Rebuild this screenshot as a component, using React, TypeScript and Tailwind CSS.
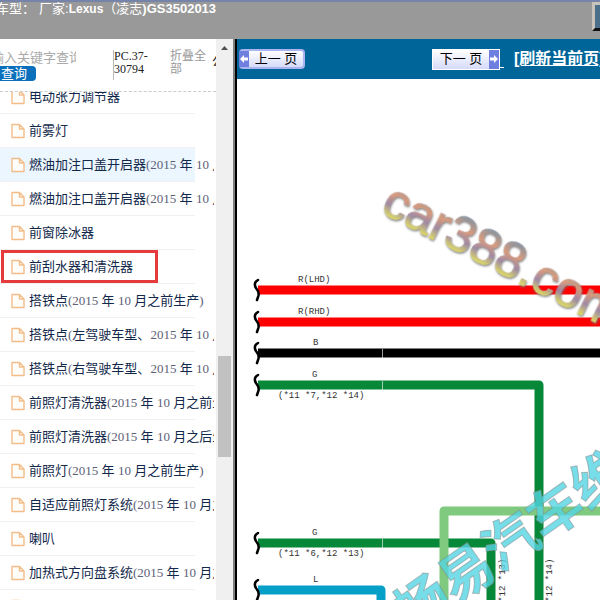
import React from "react";

const CJK_SANS = "font-['Liberation_Sans','Noto_Sans_CJK_SC',sans-serif]";
const CJK_SERIF = "font-['Liberation_Serif','Noto_Sans_CJK_SC',serif]";

const systems: { name: string; active?: boolean; marked?: boolean }[] = [
  { name: "电动张力调节器" },
  { name: "前雾灯" },
  { name: "燃油加注口盖开启器(2015 年 10 月之前生产)", active: true },
  { name: "燃油加注口盖开启器(2015 年 10 月之后生产)" },
  { name: "前窗除冰器" },
  { name: "前刮水器和清洗器", marked: true },
  { name: "搭铁点(2015 年 10 月之前生产)" },
  { name: "搭铁点(左驾驶车型、2015 年 10 月之后生产)" },
  { name: "搭铁点(右驾驶车型、2015 年 10 月之后生产)" },
  { name: "前照灯清洗器(2015 年 10 月之前生产)" },
  { name: "前照灯清洗器(2015 年 10 月之后生产)" },
  { name: "前照灯(2015 年 10 月之前生产)" },
  { name: "自适应前照灯系统(2015 年 10 月之后生产)" },
  { name: "喇叭" },
  { name: "加热式方向盘系统(2015 年 10 月之后生产)" },
  { name: "" },
];

function PageIcon() {
  return (
    <svg width="14" height="16" viewBox="0 0 14 16" className="shrink-0" aria-hidden="true">
      <path
        d="M1 1.5h7.5l4.5 4.5v8.5h-12zM8.5 1.5v4.5h4.5"
        fill="#fffdf9"
        stroke="#f3bd8a"
        strokeWidth="1.4"
        strokeLinejoin="round"
      />
    </svg>
  );
}

function Header() {
  return (
    <header className={`flex h-[39px] shrink-0 justify-between overflow-hidden border-t-2 border-[#7784aa] bg-[#999] text-white ${CJK_SANS}`}>
      <h1 className="-ml-1 flex items-start whitespace-pre text-[13px] leading-[14px]">
        <span>车型：</span>
        <span className="pl-1">厂家:</span>
        <b className="text-[12px]">Lexus</b>
        <span>（凌志</span>
        <b className="text-[13px]">)GS3502013</b>
      </h1>
      <button
        type="button"
        aria-label="菜单"
        className="h-[29px] w-2 border-y-[3px] border-l-[3px] border-t-[#c8c4bc] border-b-[#111] border-l-[#c8c4bc] bg-[#4b6f8a]"
      />
    </header>
  );
}

function SearchBar() {
  return (
    <form
      onSubmit={(e) => e.preventDefault()}
      className="flex h-[53px] shrink-0 items-start overflow-hidden border-b border-dashed border-[#ccc] pt-[11px]"
    >
      <div className="flex w-[113px] shrink-0 flex-col items-start">
        <input
          aria-label="关键字"
          placeholder="输入关键字查询"
          className="-ml-[9px] h-4 w-[85px] p-0 text-[13px] leading-4 outline-none placeholder:text-[#aaa]"
        />
        <button type="submit" className="h-[15px] w-9 rounded-r bg-[#0b70bc] pr-2 text-[13px] leading-[15px] text-white">
          查询
        </button>
      </div>
      <div className="h-[30px] w-[57px] shrink-0 border-l border-[#bbb] text-[12px] leading-[13px] text-[#222]">
        PC.37-30794
      </div>
      <button type="button" className="w-9 shrink-0 text-left text-[12px] leading-[13px] text-[#999]">
        折叠全部
      </button>
      <button type="button" className="ml-1 mt-1 shrink-0 pl-0.5 text-[12px] leading-4 text-[#222]">
        公告
      </button>
    </form>
  );
}

function SystemName({ name }: { name: string }) {
  return (
    <span>
      {name.split(/([()0-9]+)/).map((part, i) =>
        i % 2 ? (
          <span key={i} className="text-[#5c6075]">
            {part}
          </span>
        ) : (
          part
        ),
      )}
    </span>
  );
}

function Sidebar() {
  return (
    <aside className={`flex w-[216px] shrink-0 flex-col overflow-hidden bg-white ${CJK_SERIF}`}>
      <SearchBar />
      <div className="mr-0.5 min-h-0 flex-1 overflow-hidden">
        <ul className="-mt-3 w-[195px]">
          {systems.map((s, i) => (
            <li
              key={i}
              className={`relative h-[34px] border-b border-[#f1f1f3] ${s.active ? "bg-[#ebf6fe]" : ""}`}
            >
              <a href="#" className="flex h-full items-center gap-1 whitespace-nowrap pl-[11px] text-[13px] text-[#12284a]">
                <PageIcon />
                <SystemName name={s.name} />
              </a>
              {s.marked && <span className="absolute top-0 left-px h-[33px] w-[157px] border-[3px] border-[#e53b3d]" />}
            </li>
          ))}
        </ul>
      </div>
    </aside>
  );
}

function ScrollTrack() {
  return (
    <div className="flex w-[17px] shrink-0 flex-col items-center bg-[#f0f0f0]">
      <svg width="7" height="4" viewBox="0 0 7 4" className="mt-[7px]" aria-hidden="true">
        <path d="M0 4 3.5 0 7 4z" fill="#505050" />
      </svg>
      <div className="mt-[306px] h-[101px] w-[13px] bg-[#c1c1c1]" />
    </div>
  );
}

function Arrow({ flip }: { flip?: boolean }) {
  return (
    <span className="flex h-full w-[10px] shrink-0 items-center justify-center bg-[#6f7fe0]">
      <svg width="8" height="8" viewBox="0 0 8 8" className={flip ? "rotate-180" : ""} aria-hidden="true">
        <path d="M0 4 4 0v2.5h4v3H4V8z" fill="#fff" />
      </svg>
    </span>
  );
}

function Toolbar() {
  return (
    <nav className={`flex h-10 shrink-0 items-center overflow-hidden whitespace-nowrap bg-[#069] pl-0.5 ${CJK_SANS}`}>
      <button
        type="button"
        className="flex h-5 w-[66px] shrink-0 items-center rounded-sm border-2 border-l-0 border-[#aab4f0] bg-linear-to-b from-white to-[#d5daf8] text-[13px] text-black"
      >
        <Arrow />
        <span className="flex-1 whitespace-pre text-center">上一 页</span>
      </button>
      <div className="ml-[127px] flex shrink-0 items-center">
        <button
          type="button"
          className="flex h-[21px] w-[68px] items-center border border-white bg-linear-to-b from-white to-[#d5daf8] text-[13px] text-black"
        >
          <span className="flex-1 whitespace-pre text-center">下一 页</span>
          <Arrow flip />
        </button>
        <span className="mt-4 h-px w-1 bg-white" />
        <a href="#" className="ml-[10px] text-[16px] font-bold leading-5 text-white underline">
          [刷新当前页]
        </a>
      </div>
    </nav>
  );
}

const wires = [
  { y: 290, color: "#fe0000", top: "R(LHD)", x: 298 },
  { y: 322, color: "#fe0000", top: "R(RHD)", x: 298 },
  { y: 353, color: "#000", top: "B", x: 313 },
];

function Break({ y }: { y: number }) {
  return (
    <path
      d={`M258 ${y - 10}q-5 3-2 8 4 5 2 9l-1 3`}
      fill="none"
      stroke="#000"
      strokeWidth="2.5"
      strokeLinecap="round"
    />
  );
}

function Diagram() {
  return (
    <svg className="min-h-0 w-full flex-1" role="img" aria-label="电路图">
      <defs>
        <linearGradient id="gold" x1="0" y1="0" x2="0" y2="1">
          <stop offset="0.15" stopColor="#8295a5" />
          <stop offset="0.4" stopColor="#dd9c7c" />
          <stop offset="0.6" stopColor="#a18aa8" />
          <stop offset="0.78" stopColor="#ddd76c" />
        </linearGradient>
      </defs>
      <g transform="translate(-237 -79)">
        {wires.map((w) => (
          <g key={w.y}>
            <path d={`M258 ${w.y}H2400`} stroke={w.color} strokeWidth="9" />
            <Break y={w.y} />
          </g>
        ))}
        <g fill="none" strokeWidth="9" strokeLinejoin="round">
          <path d="M258 385H539V2400" stroke="#078838" />
          <path d="M258 543H491V2400" stroke="#078838" />
          <path d="M258 590H381V2400" stroke="#059fc8" />
          <path d="M444 2400V511H2400" stroke="#7fca7f" />
        </g>
        <path d="M382.5 349v9M382.5 381v9M382.5 539v9" stroke="#fff" strokeOpacity="0.6" />
        <Break y={385} />
        <Break y={543} />
        <Break y={590} />
        <g className="font-['Liberation_Mono',monospace] text-[9px]" fill="#333">
          {wires.map((w) => (
            <text key={w.y} x={w.x} y={w.y - 8}>{w.top}</text>
          ))}
          <text x="312" y="377">G</text>
          <text x="278" y="398">(*11 *7,*12 *14)</text>
          <text x="312" y="535">G</text>
          <text x="278" y="556">(*11 *6,*12 *13)</text>
          <text x="313" y="582">L</text>
          <text transform="translate(505 645) rotate(-90)">(*11 *6,*12 *13)</text>
          <text transform="translate(552 645) rotate(-90)">(*11 *7,*12 *14)</text>
        </g>
        <text
          transform="translate(379 212) rotate(27)"
          className="font-['Liberation_Sans',sans-serif] text-[50px] drop-shadow-[1px_1px_1px_#777]"
          fill="url(#gold)"
          fillOpacity="0.9"
          stroke="url(#gold)"
          strokeWidth="1"
        >
          car388.com
        </text>
        <text
          transform="translate(411 635) rotate(-35)"
          className="font-['Noto_Sans_CJK_SC',sans-serif] text-[54px] font-bold"
          fill="#55d5e2"
          fillOpacity="0.8"
          stroke="#888"
          strokeOpacity="0.5"
          strokeWidth="1"
        >
          畅易汽车维修
        </text>
      </g>
    </svg>
  );
}

export default function App() {
  return (
    <div className="flex h-screen flex-col overflow-hidden bg-white">
      <Header />
      <div className="flex min-h-0 flex-1">
        <Sidebar />
        <ScrollTrack />
        <main className="ml-0.5 flex min-w-0 flex-1 flex-col border-l-2 border-black bg-white shadow-[-2px_0_0_#808080]">
          <Toolbar />
          <Diagram />
        </main>
      </div>
    </div>
  );
}
